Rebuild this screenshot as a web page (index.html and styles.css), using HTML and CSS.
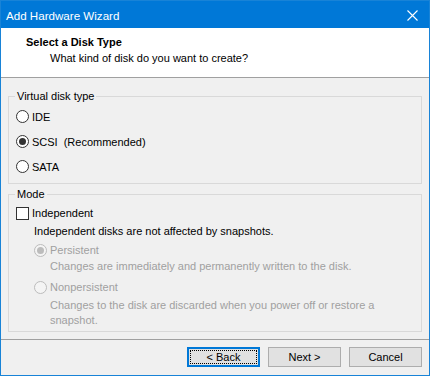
FILE: index.html
```html
<!DOCTYPE html>
<html lang="en">
<head>
    <meta charset="UTF-8">
    <meta name="viewport" content="width=device-width, initial-scale=1.0">
    <title>Add Hardware Wizard</title>
    <link rel="stylesheet" href="styles.css">
</head>
<body>

    <div class="window">
        <div class="titlebar">
            <span class="title-text">Add Hardware Wizard</span>
            <svg class="close" width="11" height="11" viewBox="0 0 11 11">
                <path d="M0.5 0.5L10.5 10.5M10.5 0.5L0.5 10.5" stroke="#fff" stroke-width="1.1" fill="none"/>
            </svg>
        </div>

        <!-- Page header -->
        <div class="header">
            <div class="header-title">Select a Disk Type</div>
            <div class="header-sub">What kind of disk do you want to create?</div>
        </div>

        <div class="content">
            <fieldset class="group">
                <legend>Virtual disk type</legend>
                <div class="option"><span class="radio"></span>IDE</div>
                <div class="option"><span class="radio checked"></span>SCSI<span class="hint">(Recommended)</span></div>
                <div class="option"><span class="radio"></span>SATA</div>
            </fieldset>

            <fieldset class="group mode">
                <legend>Mode</legend>
                <div class="check-row"><span class="checkbox"></span>Independent</div>
                <div class="note">Independent disks are not affected by snapshots.</div>
                <div class="sub-option disabled"><span class="radio checked"></span>Persistent</div>
                <div class="desc disabled">Changes are immediately and permanently written to the disk.</div>
                <div class="sub-option disabled second"><span class="radio"></span>Nonpersistent</div>
                <div class="desc disabled wrap">Changes to the disk are discarded when you power off or restore a snapshot.</div>
            </fieldset>
        </div>

        <div class="footer">
            <button class="btn default"><span class="focus">&lt; Back</span></button>
            <button class="btn">Next &gt;</button>
            <button class="btn">Cancel</button>
        </div>
    </div>

</body>
</html>
```

FILE: styles.css
```css
body {
    margin: 0;
    padding: 0;
    font-family: "Liberation Sans", Arial, sans-serif;
    font-size: 11px;
    color: #000;
}

.window {
    width: 430px;
    height: 376px;
    box-sizing: border-box;
    border: 1px solid #1883d7;
    background-color: #f0f0f0;
    display: flex;
    flex-direction: column;
}

.titlebar {
    height: 27px;
    background-color: #0078d7;
    color: #fff;
    display: flex;
    align-items: center;
    justify-content: space-between;
    padding: 0 11px 0 5px;
    font-size: 11.6px;
}

.title-text {
    margin-top: 1px;
}

.close {
    display: block;
    margin-top: 1px;
}

.header {
    height: 49px;
    box-sizing: content-box;
    background-color: #fff;
    border-bottom: 1px solid #a0a0a0;
}

.header-title {
    font-weight: bold;
    line-height: 16px;
    margin: 6px 0 0 25px;
}

.header-sub {
    line-height: 16px;
    margin-left: 49px;
}

.content {
    flex: 1;
    padding: 10px 7px 0 7px;
}

.group {
    margin: 0;
    padding: 0 6px 4px 7px;
    border: 1px solid #d9d9d9;
    min-width: 0;
}

.group legend {
    padding: 0 2px;
    margin-left: -1px;
    line-height: 16px;
}

.option {
    height: 25px;
    display: flex;
    align-items: center;
}

.hint {
    margin-left: 6px;
}

.radio {
    width: 11px;
    height: 11px;
    border: 1px solid #333;
    border-radius: 50%;
    background-color: #fff;
    margin-right: 3px;
    display: inline-flex;
    align-items: center;
    justify-content: center;
    flex-shrink: 0;
}

.radio.checked::after {
    content: "";
    width: 7px;
    height: 7px;
    border-radius: 50%;
    background-color: #333;
}

.mode {
    margin-top: 2px;
    padding-bottom: 3px;
}

.check-row {
    height: 18px;
    display: flex;
    align-items: center;
    margin-top: 2px;
}

.checkbox {
    width: 11px;
    height: 11px;
    border: 1px solid #333;
    background-color: #fff;
    margin-right: 3px;
}

.note {
    line-height: 16px;
    margin-left: 18px;
    margin-top: 1px;
}

.sub-option {
    height: 18px;
    display: flex;
    align-items: center;
    margin-left: 18px;
    margin-top: 2px;
}

.sub-option.second {
    margin-top: 4px;
}

.desc {
    line-height: 15px;
    margin-left: 34px;
}

.wrap {
    margin-top: 2px;
    margin-right: 40px;
}

.disabled {
    color: #a0a0a0;
}

.disabled .radio {
    border-color: #bcbcbc;
    background-color: #f4f4f4;
}

.disabled .radio.checked::after {
    background-color: #bcbcbc;
}

.footer {
    height: 28px;
    flex-shrink: 0;
    border-top: 1px solid #a0a0a0;
    display: flex;
    justify-content: flex-end;
    align-items: flex-start;
    gap: 8px;
    padding: 7px 7px 0 0;
}

.btn {
    width: 73px;
    height: 20px;
    box-sizing: border-box;
    background-color: #e1e1e1;
    border: 1px solid #adadad;
    font-family: "Liberation Sans", Arial, sans-serif;
    font-size: 11px;
    color: #000;
    padding: 0;
}

.btn.default {
    border: 2px solid #0078d7;
    padding: 1px;
}

.btn .focus {
    display: flex;
    align-items: center;
    justify-content: center;
    height: 100%;
    outline: 1px dotted #000;
    outline-offset: -1px;
}
```
